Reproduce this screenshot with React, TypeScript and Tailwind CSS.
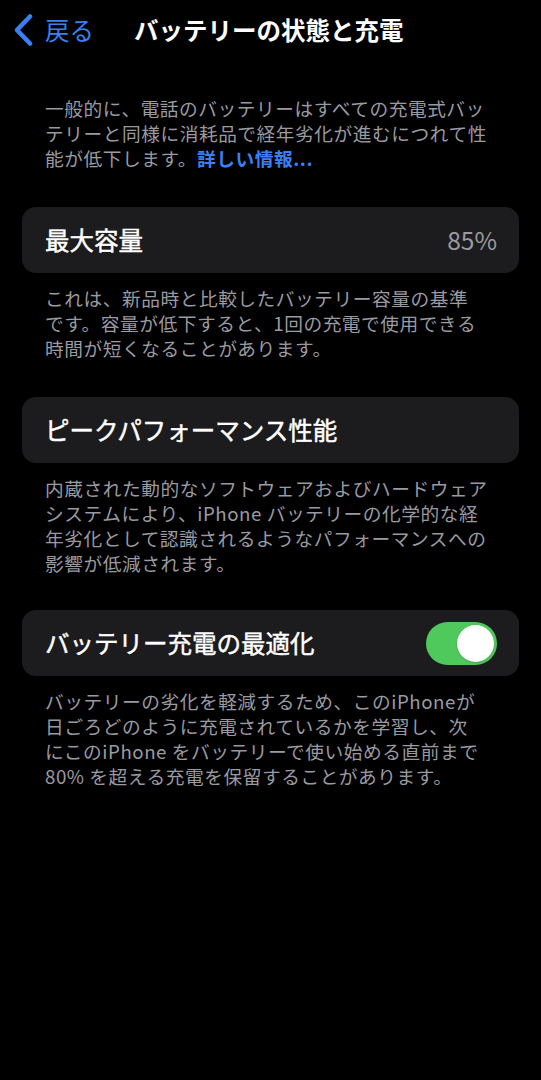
import React, { useState } from 'react';

const FONT = { fontFamily: '"Noto Sans CJK JP", "Noto Sans", sans-serif' };

function Footer({ lines }: { lines: React.ReactNode[] }) {
  return (
    <div className="px-[45px] text-[18.7px] leading-[25px] tracking-[0.55px] text-[#9a9aa0]">
      {lines.map((l, i) => (
        <div key={i} className="whitespace-nowrap">{l}</div>
      ))}
    </div>
  );
}

function Card({ children }: { children: React.ReactNode }) {
  return (
    <div className="mx-[22px] h-[66px] rounded-[14px] bg-[#1c1c1e] pl-[23px] pr-[22px] flex items-center justify-between">
      {children}
    </div>
  );
}

function Toggle({ on, onChange }: { on: boolean; onChange: (v: boolean) => void }) {
  return (
    <button
      onClick={() => onChange(!on)}
      className={`relative w-[71px] h-[43px] rounded-full transition-colors ${on ? 'bg-[#4fc95c]' : 'bg-[#39393d]'}`}
    >
      <span
        className={`absolute top-[3px] h-[37px] w-[37px] rounded-full bg-white shadow transition-all ${on ? 'left-[31px]' : 'left-[3px]'}`}
      />
    </button>
  );
}

function Title({ children }: { children: React.ReactNode }) {
  return <span className="text-[24.5px] [-webkit-text-stroke:0.45px_white]">{children}</span>;
}

export default function App() {
  const [optimized, setOptimized] = useState(true);

  return (
    <div className="min-h-[1080px] w-[541px] bg-black text-white" style={FONT}>
      {/* Nav bar */}
      <div className="relative h-[60px] flex items-center">
        <div className="flex items-center pl-[11px] text-[#3a80f3]">
          <svg width="24" height="34" viewBox="0 0 24 34" fill="none">
            <path d="M19 3.5 L6 17 L19 30.5" stroke="currentColor" strokeWidth="4.6" strokeLinecap="round" strokeLinejoin="round" />
          </svg>
          <span className="ml-[10px] text-[24.5px] leading-none">戻る</span>
        </div>
        <span className="ml-[40px] text-[24.5px] font-bold leading-none">バッテリーの状態と充電</span>
      </div>

      <div className="pt-[35px]">
        <Footer
          lines={[
            '一般的に、電話のバッテリーはすべての充電式バッ',
            'テリーと同様に消耗品で経年劣化が進むにつれて性',
            <>
              能が低下します。<span className="text-[#3a80f3] font-bold">詳しい情報...</span>
            </>,
          ]}
        />
      </div>

      <div className="mt-[37px]">
        <Card>
          <Title>最大容量</Title>
          <span className="text-[24.5px] text-[#9a9aa0]">85%</span>
        </Card>
      </div>
      <div className="mt-[12px]">
        <Footer
          lines={[
            'これは、新品時と比較したバッテリー容量の基準',
            'です。容量が低下すると、1回の充電で使用できる',
            '時間が短くなることがあります。',
          ]}
        />
      </div>

      <div className="mt-[37px]">
        <Card>
          <Title>ピークパフォーマンス性能</Title>
        </Card>
      </div>
      <div className="mt-[12px]">
        <Footer
          lines={[
            '内蔵された動的なソフトウェアおよびハードウェア',
            'システムにより、iPhone バッテリーの化学的な経',
            '年劣化として認識されるようなパフォーマンスへの',
            '影響が低減されます。',
          ]}
        />
      </div>

      <div className="mt-[35px]">
        <Card>
          <Title>バッテリー充電の最適化</Title>
          <Toggle on={optimized} onChange={setOptimized} />
        </Card>
      </div>
      <div className="mt-[12px]">
        <Footer
          lines={[
            'バッテリーの劣化を軽減するため、このiPhoneが',
            '日ごろどのように充電されているかを学習し、次',
            'にこのiPhone をバッテリーで使い始める直前まで',
            '80% を超える充電を保留することがあります。',
          ]}
        />
      </div>
    </div>
  );
}
